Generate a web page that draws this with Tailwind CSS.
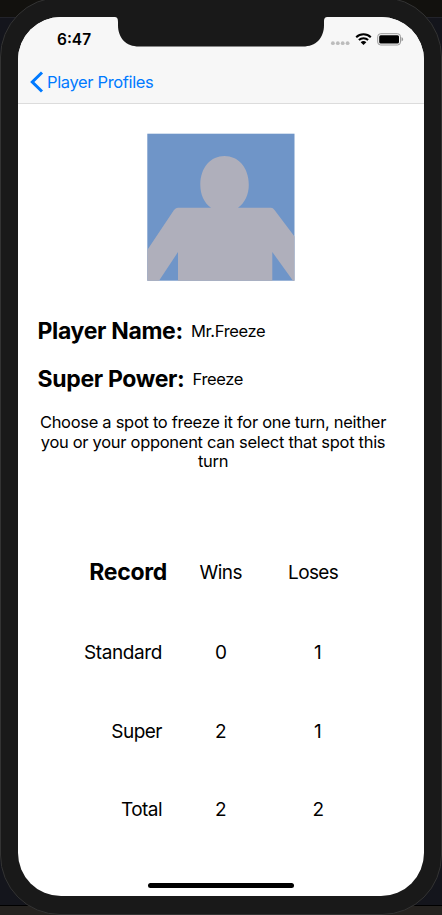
<!DOCTYPE html>
<html lang="en">
<head>
<meta charset="utf-8">
<title>Player Profile</title>
<script src="https://cdn.jsdelivr.net/npm/@tailwindcss/browser@4"></script>
</head>
<body class="h-[915px] w-[442px] overflow-hidden bg-[linear-gradient(#12110e_0_17px,#22232a_17px_18px,#14151c_18px_905px,#000_905px_906px,#25221f_906px)] font-['Inter','Liberation_Sans',sans-serif] text-black">
<div class="-mt-[3px] h-[918px] w-[442px] rounded-[60px] border border-[#333] bg-[#191919] px-[17px] pt-[19px]">
  <main class="relative flex h-[879px] w-[406px] flex-col overflow-hidden rounded-[43px] bg-white">
    <svg class="absolute left-[96px] top-0" width="214" height="30" viewBox="0 0 214 30" fill="#191919"><path d="M0 0C3 0 4 1 4 5V8C4 21 12 29.500 25 29.500H189C202 29.500 210 21 210 8V5C210 1 211 0 214 0Z"/></svg>
    <header class="h-[87px] shrink-0 border-b border-[#dcdcdc] bg-[#f7f7f7]">
      <div class="flex h-[44px] items-center justify-between pl-[39px] pr-[20px]">
        <span class="pt-[2px] text-[15.500px] font-semibold leading-5">6:47</span>
        <div class="flex items-center">
          <svg width="20" height="14" viewBox="0 0 20 14" fill="#bcbcbc"><circle cx="2.900" cy="11.200" r="1.900"/><circle cx="7.800" cy="11.200" r="1.900"/><circle cx="12.700" cy="11.200" r="1.900"/><circle cx="17.600" cy="11.200" r="1.900"/></svg>
          <svg class="ml-[5px]" width="17" height="12" viewBox="0 0 17 12" fill="none" stroke="#000" stroke-width="2"><path d="M1.200 4.300C5.200 .3 11.800 .3 15.800 4.300M3.900 7C6.400 4.500 10.600 4.500 13.100 7"/><path d="M5.700 9.200C7.200 7.700 9.800 7.700 11.300 9.200L8.500 12Z" fill="#000" stroke="none"/></svg>
          <svg class="ml-[5px]" width="27" height="13" viewBox="0 0 27 13"><rect x=".7" y=".7" width="22.800" height="11.300" rx="3" fill="none" stroke="#999" stroke-width="1"/><rect x="2.200" y="2.200" width="19.800" height="8.300" rx="1.500"/><path d="M24.500 4.300C26.700 5 26.700 7.700 24.500 8.400Z" fill="#999"/></svg>
        </div>
      </div>
      <div class="flex h-[42px] items-center pl-[12px] text-[#007aff]">
        <svg width="14" height="22" viewBox="0 0 14 22" fill="none" stroke="#007aff" stroke-width="3"><path d="M12 1.500L2.300 11L12 20.500"/></svg>
        <span class="ml-[3px] whitespace-nowrap text-[16.500px] leading-5 tracking-[-0.360px]">Player Profiles</span>
      </div>
    </header>
    <svg class="ml-[129px] mt-[29px] shrink-0" width="148" height="148" viewBox="0 0 148 148"><rect x=".3" y=".7" width="147.200" height="147" fill="#6f95c8"/><path d="M.3 117L27 77Q29 74.800 31 74.800H64C57 70 53.300 61 53.300 52C53.300 34 64 23 77.500 23S101.800 34 101.800 52C101.800 61 98 70 91 74.800H124Q126 74.800 127.500 77L147.500 103.500V147.700H146L125.300 119V147.700H31V119L12 147.700H.3Z" fill="#afafbb"/></svg>
    <section class="flex flex-col px-[19.500px] pt-[34px]">
      <div class="flex h-[32px] items-center whitespace-nowrap"><h1 class="w-[153.500px] text-[23px] font-bold tracking-[-0.330px]">Player Name:</h1><span class="text-[16.500px] tracking-[-0.360px]">Mr.Freeze</span></div>
      <div class="mt-[16px] flex h-[32px] items-center whitespace-nowrap"><h2 class="w-[155px] text-[23px] font-bold tracking-[-0.330px]">Super Power:</h2><span class="text-[16.500px] tracking-[-0.360px]">Freeze</span></div>
      <p class="mt-[18px] w-[351px] whitespace-nowrap text-center text-[16.500px] leading-[19.700px] tracking-[-0.300px]">Choose a spot to freeze it for one turn, neither<br>you or your opponent can select that spot this<br>turn</p>
    </section>
    <section class="ml-[50px] mt-[61px] grid w-[300px] grid-cols-[99px_72px_1fr] grid-rows-[80px_79px_79px_79px] items-center text-[19px] tracking-[-0.400px]">
      <h3 class="pb-[2px] text-right text-[23px] font-bold tracking-[-0.300px]">Record</h3><span class="pl-[32.500px] tracking-[-0.550px]">Wins</span><span class="pl-[49px] tracking-[-0.600px]">Loses</span>
      <span class="pr-[5px] pt-[1px] text-right">Standard</span><span class="pl-[48px] pt-[1px]">0</span><span class="pl-[75px] pt-[1px]">1</span>
      <span class="pr-[5px] pt-[1px] text-right tracking-[-0.500px]">Super</span><span class="pl-[48px] pt-[1px]">2</span><span class="pl-[75px] pt-[1px]">1</span>
      <span class="pr-[5px] text-right tracking-[-0.550px]">Total</span><span class="pl-[48px]">2</span><span class="pl-[73.500px]">2</span>
    </section>
    <div class="mb-[8px] ml-[130px] mt-auto h-[5px] w-[146px] shrink-0 rounded-full bg-black"></div>
  </main>
</div>
</body>
</html>
